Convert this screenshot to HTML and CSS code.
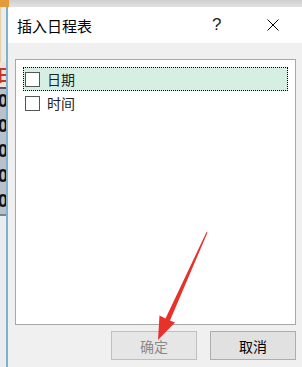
FILE: index.html
```html
<!DOCTYPE html>
<html lang="zh">
<head>
<meta charset="utf-8">
<title>插入日程表</title>
<link rel="stylesheet" href="styles.css">
</head>
<body>
<div class="top-band"><span class="corner"></span></div>
<div class="main">
  <div class="sheet">
    <div class="sheet-top"></div>
    <div class="cell cell-head">日</div>
    <div class="cell-rows">
      <div class="cell">0</div>
      <div class="cell">0</div>
      <div class="cell">0</div>
      <div class="cell">0</div>
      <div class="cell">0</div>
    </div>
    <div class="sheet-bottom"></div>
  </div>
  <div class="dialog">
    <div class="titlebar">
      <span class="title">插入日程表</span>
      <span class="help">?</span>
      <span class="close">
        <svg width="12" height="12" viewBox="0 0 12 12"><path d="M0.5 0.5 L11.5 11.5 M11.5 0.5 L0.5 11.5" stroke="#000" stroke-width="1" fill="none"/></svg>
      </span>
    </div>
    <div class="content">
      <div class="list">
        <div class="row selected"><span class="box"></span><span class="label">日期</span></div>
        <div class="row"><span class="box"></span><span class="label">时间</span></div>
      </div>
      <div class="buttons">
        <button class="btn disabled">确定</button>
        <button class="btn">取消</button>
      </div>
    </div>
  </div>
</div>
<svg class="arrow" width="302" height="367" viewBox="0 0 302 367">
  <polygon points="207.5,232.5 206.5,232 165.5,318.5 159.5,315.5 158,340 175,322.5 170,320.5" fill="#e8312b"/>
</svg>
</body>
</html>
```
FILE: styles.css
```css
html, body {
  margin: 0;
  padding: 0;
}
body {
  width: 302px;
  height: 367px;
  overflow: hidden;
  background: #f0f0f0;
  font-family: "Noto Sans CJK SC", "Noto Sans", sans-serif;
  position: relative;
}
.top-band {
  height: 7px;
  background: linear-gradient(#cfcfcf, #e2e2e2);
  display: flex;
}
.corner {
  width: 9px;
  height: 7px;
  background: #e29a3a;
}
.main {
  display: flex;
  height: 360px;
}
.sheet {
  width: 6px;
  display: flex;
  flex-direction: column;
  overflow: hidden;
  background: #e4e6e8;
}
.sheet-top {
  height: 55px;
  background: linear-gradient(90deg, #e6c48f 0, #ececec 30%);
}
.cell {
  height: 25px;
  font-family: "DejaVu Sans", sans-serif;
  font-weight: bold;
  font-size: 17px;
  line-height: 25px;
  color: #111;
  white-space: nowrap;
  margin-left: -3px;
}
.cell-head {
  color: #c0392b;
  font-family: "Noto Sans CJK SC", sans-serif;
  font-size: 16px;
  background: #efe2dc;
  border-bottom: 2px solid #556;
}
.cell-rows {
  background: #b7c2cc;
  border-bottom: 2px solid #6e8799;
}
.sheet-bottom {
  flex: 1;
  background: #e9edf0;
}
.dialog {
  flex: 1;
  border-left: 2px solid #7fb1cf;
  display: flex;
  flex-direction: column;
}
.titlebar {
  height: 36px;
  background: #fff;
  display: flex;
  align-items: center;
}
.title {
  font-size: 15px;
  color: #000;
  margin-left: 9px;
  flex: 1;
}
.help {
  font-family: "Liberation Sans", sans-serif;
  font-size: 17px;
  color: #222;
  width: 10px;
  margin-right: 45px;
}
.close {
  display: flex;
  width: 12px;
  margin-right: 23px;
}
.content {
  flex: 1;
  padding: 16px 0 0 7px;
  display: flex;
  flex-direction: column;
}
.list {
  width: 281px;
  height: 266px;
  background: #fff;
  border: 1px solid #a8a8a8;
  padding: 7px 7px 0 7px;
  box-sizing: border-box;
}
.row {
  height: 24px;
  display: flex;
  align-items: center;
  box-sizing: border-box;
  border: 1px dotted transparent;
  padding-left: 1px;
}
.row.selected {
  background: #d5f0e3;
  border: 1px dotted #000;
}
.box {
  width: 13px;
  height: 13px;
  border: 1px solid #555;
  background: #fff;
  box-sizing: content-box;
}
.label {
  font-size: 14px;
  color: #222;
  margin-left: 7px;
}
.buttons {
  display: flex;
  justify-content: flex-end;
  gap: 13px;
  margin-top: 6px;
  width: 281px;
}
.btn {
  width: 86px;
  height: 29px;
  background: #e1e1e1;
  border: 1px solid #adadad;
  font-family: "Noto Sans CJK SC", sans-serif;
  font-size: 14px;
  color: #000;
  padding: 0;
  margin: 0;
}
.btn.disabled {
  color: #8a8a8a;
  border-color: #bfbfbf;
  background: #e6e6e6;
}
.arrow {
  position: absolute;
  left: 0;
  top: 0;
  pointer-events: none;
}
```
